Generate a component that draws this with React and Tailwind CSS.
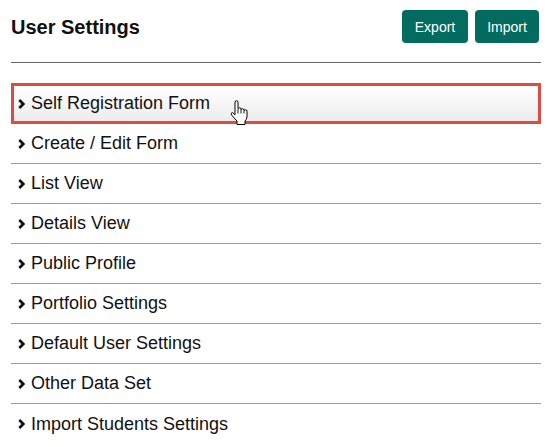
import React from "react";

const items = [
  "Create / Edit Form",
  "List View",
  "Details View",
  "Public Profile",
  "Portfolio Settings",
  "Default User Settings",
  "Other Data Set",
  "Import Students Settings",
];

function Chevron() {
  return (
    <svg width="7" height="10" viewBox="0 0 7 10" className="shrink-0">
      <path d="M1.3 1 L5.3 5 L1.3 9" fill="none" stroke="#111" strokeWidth="2.7" />
    </svg>
  );
}

function HandCursor() {
  return (
    <svg
      width="18"
      height="26"
      viewBox="0 0 18 26"
      className="absolute left-[216px] top-[14px] z-10"
    >
      <path
        d="M5 1.5 Q6.5 0 8 1.5 L8 8.5 Q9.5 7 11 8.5 L11 9.5 Q12.5 8 14 9.5 L14 10.5 Q15.5 9 17 10.5 L17 17 Q16.4 19.6 15 21 L15 24.5 L7 24.5 L7 21 Q4 18 1.5 14.8 Q0.6 12.6 2.6 12.6 L5 14.8 Z"
        fill="#fff"
        stroke="#000"
        strokeWidth="1"
        strokeLinejoin="round"
      />
      <path d="M8 9 L8 13.5 M11 9.5 L11 13.5 M14 10.5 L14 13.5" stroke="#000" strokeWidth="0.9" />
    </svg>
  );
}

export default function App() {
  return (
    <div
      className="w-[547px] h-[447px] bg-white pl-[11px] overflow-hidden"
      style={{ fontFamily: '"Liberation Sans", Arial, sans-serif' }}
    >
      <div className="w-[530px] flex items-center justify-between pt-[10px] pr-[2px]">
        <h1 className="text-[20px] font-bold text-[#111] leading-none mt-[1px]">
          User Settings
        </h1>
        <div className="flex gap-[7px]">
          <button className="h-[33px] w-[66px] rounded-[4px] bg-[#036b5f] text-white text-[14px] leading-none">
            Export
          </button>
          <button className="h-[33px] w-[64px] rounded-[4px] bg-[#036b5f] text-white text-[14px] leading-none">
            Import
          </button>
        </div>
      </div>
      <div className="mt-[19px] h-px bg-[#666] w-[530px]" />
      <div className="mt-[20px] w-[530px]">
        <div className="relative h-[41px] border-[3px] border-[#e04a45] bg-gradient-to-b from-white to-[#ececec] flex items-center gap-[6px] pl-[4px]">
          <Chevron />
          <span className="text-[18px] text-[#111]">Self Registration Form</span>
          <HandCursor />
        </div>
        {items.map((t, i) => (
          <div
            key={t}
            className={
              "h-[40px] flex items-center gap-[6px] pl-[7px] " +
              (i < items.length - 1 ? "border-b border-[#9a9a9a]" : "")
            }
          >
            <Chevron />
            <span className="text-[18px] text-[#111]">{t}</span>
          </div>
        ))}
      </div>
    </div>
  );
}
